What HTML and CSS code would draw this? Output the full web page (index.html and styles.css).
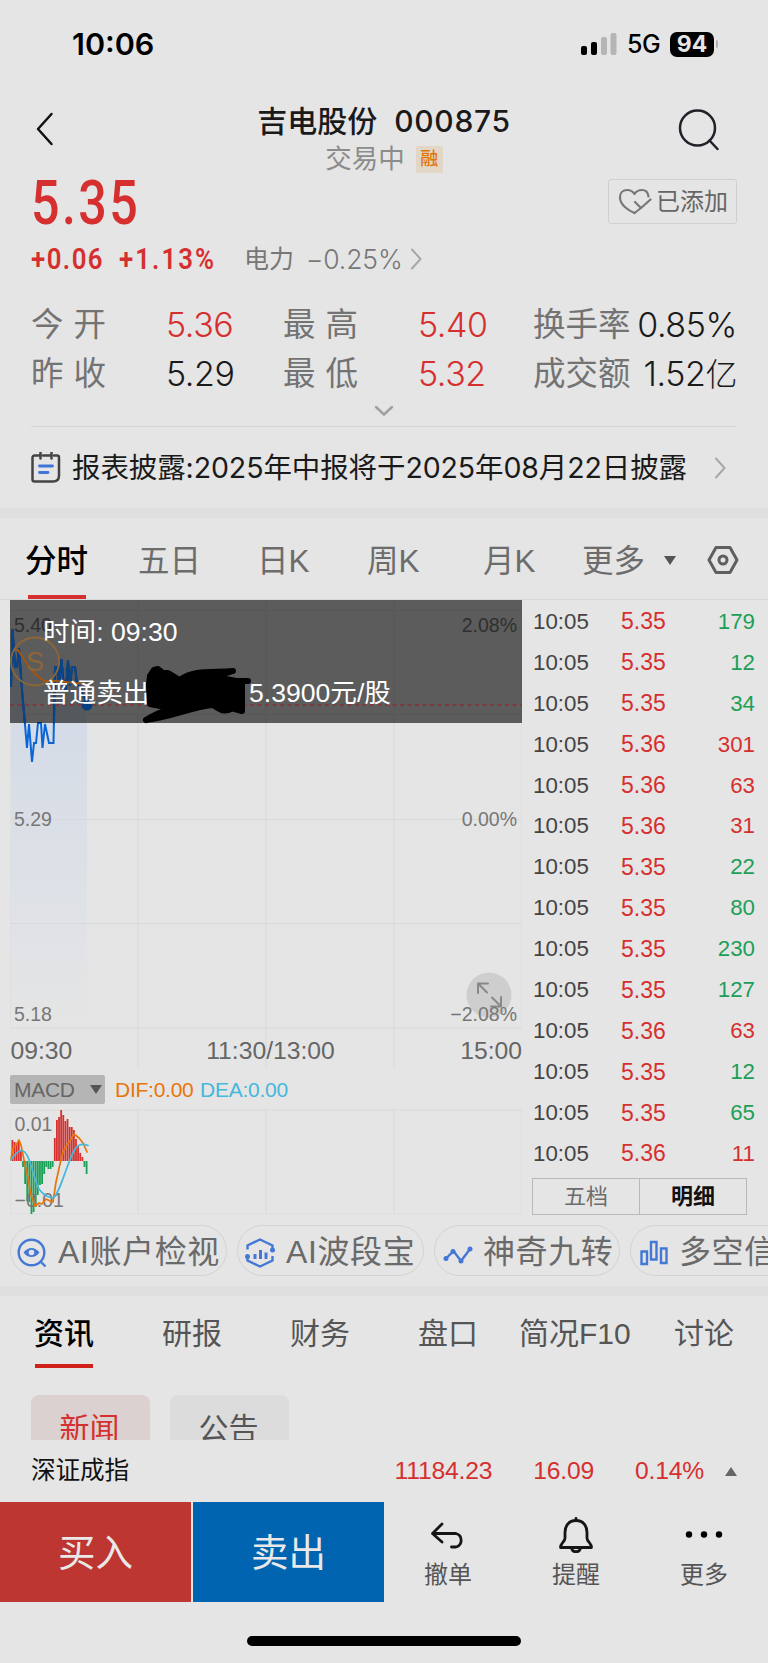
FILE: index.html
```html
<!DOCTYPE html>
<html lang="zh-CN">
<head>
<meta charset="UTF-8">
<meta name="viewport" content="width=device-width, initial-scale=1.0">
<title>吉电股份 000875</title>
<link rel="stylesheet" href="styles.css">
</head>
<body>
<div class="status">
    <span class="clock">10:06</span>
    <div class="status-right">
        <svg width="36" height="22" viewBox="0 0 36 22">
            <rect x="0" y="13" width="6" height="9" rx="2"/>
            <rect x="10" y="9" width="6" height="13" rx="2"/>
            <rect x="20" y="4" width="6" height="18" rx="2" fill="#b5b5b5"/>
            <rect x="29.500" y="0" width="6" height="22" rx="2" fill="#b5b5b5"/>
        </svg>
        <span class="network">5G</span>
        <span class="battery">94</span>
        <span class="battery-tip"></span>
    </div>
</div>

<div class="header">
    <svg class="back" width="18" height="34" viewBox="0 0 18 34"><path d="M15.500 2L2 17l13.500 15"/></svg>
    <div class="header-title">
        <h1>吉电股份<span class="code">000875</span></h1>
        <div class="sub"><span>交易中</span><span class="badge">融</span></div>
    </div>
    <svg class="search" width="42" height="42" viewBox="0 0 42 42"><circle cx="19.500" cy="19" r="17.500"/><path d="M31.500 31.500l8 8.500"/></svg>
</div>

<div class="quote">
    <div class="quote-top">
        <span class="price">5.35</span>
        <div class="added">
            <svg width="34" height="28" viewBox="0 0 34 28"><path d="M16.500 25C11 23 2 17 2 9.500 2 5 5 2 9 2c3.500 0 6 1.500 7.500 4C18 3.500 20.500 2 24 2c3.500 0 6 2.500 6.500 6.500"/><path d="M17 14l6 6L32.500 11.500M23 20l-6.500 5"/></svg>
            <span>已添加</span>
        </div>
    </div>
    <div class="change">
        <span class="chg">+0.06</span>
        <span class="pct">+1.13%</span>
        <span class="sector">电力</span>
        <span class="sector-pct">−0.25%</span>
        <svg width="13" height="22" viewBox="0 0 13 22"><path d="M2 1.500L10.500 11 2 20.500"/></svg>
    </div>
    <div class="stats">
        <span class="k wide">今开</span><span class="v red">5.36</span>
        <span class="k wide">最高</span><span class="v red">5.40</span>
        <span class="k">换手率</span><span class="v last">0.85%</span>
        <span class="k wide">昨收</span><span class="v">5.29</span>
        <span class="k wide">最低</span><span class="v red">5.32</span>
        <span class="k">成交额</span><span class="v last">1.52<i>亿</i></span>
    </div>
    <div class="expand"><svg width="20" height="12" viewBox="0 0 20 12"><path d="M2 2l8 7.500L18 2"/></svg></div>
</div>

<div class="notice">
    <svg width="30" height="31" viewBox="0 0 30 31">
        <path d="M8 3.500H3.500a2 2 0 0 0-2 2v22a2 2 0 0 0 2 2H22q6 0 6-6v-18a2 2 0 0 0-2-2h-3M12 3.500h7M9.500 0v6.500M20.500 0v6.500" class="ink"/>
        <path d="M8.500 14h13M8.500 20.500h8.500" class="line"/>
    </svg>
    <span class="notice-text">报表披露:2025年中报将于2025年08月22日披露</span>
    <svg class="more-arrow" width="13" height="22" viewBox="0 0 13 22"><path d="M2 1.500L10.500 11 2 20.500"/></svg>
</div>
<div class="band"></div>

<div class="periods">
    <span class="active">分时</span>
    <span>五日</span>
    <span>日K</span>
    <span>周K</span>
    <span>月K</span>
    <span>更多<b class="caret"></b></span>
    <svg width="32" height="28" viewBox="0 0 32 28"><path d="M9 1.500h14L30 14l-7 12.500H9L2 14z"/><circle cx="16" cy="14" r="4"/></svg>
</div>

<div class="market">
    <div class="charts">
        <div class="minute">
            <svg width="512" height="468" viewBox="10 600 512 468">
                <defs>
                    <linearGradient id="fill" x1="0" y1="0" x2="0" y2="1">
                        <stop offset="0" stop-color="#d0d9e8"/>
                        <stop offset="1" stop-color="#e5e5e5"/>
                    </linearGradient>
                </defs>
                <path fill="url(#fill)" d="M10 686L12.500 629 15 667H17L19 648 22 690 27 723H51L55 667H70L80 686 87 705V1028H10z"/>
                <path class="grid" d="M10 610.500H522M10 714.500H522M10 819.500H522M10 923.500H522M10 1028H522M138 600V1068M266 600V1068M394 600V1068"/>
                <path class="grid edge" d="M10.500 600V1028M521.500 600V1028"/>
                <text class="axis" x="14" y="632">5.40</text>
                <text class="axis" x="517" y="632" text-anchor="end">2.08%</text>
                <circle cx="489" cy="995" r="22.500" fill="#cecece"/>
                <path class="zoom-arrow" d="M478 993V983.500H488M478.500 984L487 992.500M501 997V1006.500H491M500.500 1006L492 997.500"/>
                <text class="axis" x="14" y="826">5.29</text>
                <text class="axis" x="517" y="826" text-anchor="end">0.00%</text>
                <text class="axis" x="14" y="1021">5.18</text>
                <text class="axis" x="517" y="1021" text-anchor="end">−2.08%</text>
                <text class="time" x="10.500" y="1059">09:30</text>
                <text class="time" x="270.500" y="1059" text-anchor="middle">11:30/13:00</text>
                <text class="time" x="522" y="1059" text-anchor="end">15:00</text>
                <path class="trend" d="M11 686L12.500 629 15 667H17L19 648 22 690 27 748 29 724 32 762 34 743H36L38 723H41L42.500 748 45 724 49 743H53.500L55 667H57L59 684 61.500 659 64 690H66L68 660 70 686 72 667H75L77 684 80 686 87 705"/>
                <rect x="10" y="600" width="512" height="123" fill="#000" fill-opacity=".6"/>
                <!-- part of the lines still visible through the tip -->
                <path class="trend dim" d="M11 686L12.500 629 15 667H17L19 648 22 690 25 723M54 723L55 667H57L59 684 61.500 659 64 690H66L68 660 70 686 72 667H75L77 684 80 686 87 705"/>
                <path class="avg" d="M14 650H18L23 658 30 668 36 675 44 681H56L84 684"/>
                <circle class="sell" cx="35" cy="661.500" r="24"/>
                <text class="sell-text" x="35" y="671" text-anchor="middle">S</text>
                <path class="dash" d="M10 705H522"/>
                <circle cx="87" cy="705" r="5.500" fill="#083f80"/>
                <g class="tip">
                    <text x="43" y="641">时间: 09:30</text>
                    <text x="43" y="702">普通卖出</text>
                    <text x="249" y="702">5.3900元/股</text>
                </g>
                <!-- crossed out amount -->
                <path class="scribble" fill="#000" d="M149 684L150 676 154 670 158 669 163 673 168 673 178 679 192 680 226 679 241 682V706L222 707 205 703 185 707 160 706 150 704z"/>
                <path class="scribble" d="M180 680C194 669 215 673 233 671C220 676 203 675 190 680M225 681H248M242 683V711L224 706M146 720C158 712 178 705 198 703M146 720C172 717 192 707 212 705C220 708 222 714 233 708"/>
            </svg>
        </div>
        <div class="macd-head">
            <span class="macd-name">MACD<b class="caret"></b></span>
            <span class="dif">DIF:0.00</span>
            <span class="dea">DEA:0.00</span>
        </div>
        <svg class="macd" width="512" height="107" viewBox="10 1108 512 107">
            <path class="grid" d="M10 1110H522M138 1108V1214M266 1108V1214M394 1108V1214"/>
            <path class="grid edge" d="M10 1214H522M10.500 1110V1214M521.500 1110V1214"/>
            <g id="macdBars"></g>
            <text class="axis" x="14.500" y="1131">0.01</text>
            <text class="axis" x="14.500" y="1207">−0.01</text>
            <path class="dif-line" d="M11 1159L13 1148 16 1145 19 1140 21 1145 24 1160 28 1178 31 1195 35 1206 39 1203 42 1204 46 1199 50 1201 53 1202 56 1182 60 1164 63 1152 67 1145 70 1141 74 1134 79 1138 83 1143 87 1152"/>
            <path class="dea-line" d="M11 1160Q16 1152 21 1150.500C30 1150 33 1178 39 1189C44 1196 48 1197 53 1198C60 1194 66 1165 75 1149Q80 1142 88 1145.500"/>
        </svg>
    </div>
    <div class="ticks">
        <div id="tickList"></div>
        <div class="tick-switch"><span>五档</span><span class="on">明细</span></div>
    </div>
</div>

<div class="tools">
    <div class="tool t1">
        <svg width="30" height="30" viewBox="0 0 30 30"><circle cx="14.500" cy="14.500" r="12.800"/><path d="M23.500 23.500l5 5"/><path class="solid" fill-rule="evenodd" d="M6.500 14.500C11 8.500 18 8.500 22.500 14.500 18 20.500 11 20.500 6.500 14.500zM14.500 11.700a2.800 2.800 0 1 0 0 5.600 2.800 2.800 0 1 0 0-5.600z"/></svg>
        <span>AI账户检视</span>
    </div>
    <div class="tool t2">
        <svg width="30" height="30" viewBox="0 0 30 30"><path d="M2.500 11.500V7.500L15 1.500l12.500 6v4M2.500 18v4.500L15 28.500l12.500-6V18"/><path class="thick" d="M10 16v5M15.500 12v9M21 14.500v6.500"/><circle class="solid" cx="27.500" cy="12" r="2.500"/><circle class="solid" cx="2.500" cy="18.500" r="2.500"/></svg>
        <span>AI波段宝</span>
    </div>
    <div class="tool t3">
        <svg width="30" height="30" viewBox="0 0 30 30"><path d="M3 20.500L10.500 13 18 23 27 11"/><circle class="solid" cx="3" cy="20.500" r="2.500"/><circle class="solid" cx="10" cy="13.500" r="2.500"/><circle class="solid" cx="18" cy="23" r="2.500"/><circle class="solid" cx="27" cy="11" r="2.500"/></svg>
        <span>神奇九转</span>
    </div>
    <div class="tool t4">
        <svg width="30" height="30" viewBox="0 0 30 30"><path d="M2.500 13.500h5.500V26H2.500zM12 4h5.500v17.500H12zM22 10.500h5.500V25H22z"/></svg>
        <span>多空信号</span>
    </div>
</div>
<div class="band"></div>

<div class="info-tabs">
    <span class="active">资讯</span>
    <span>研报</span>
    <span>财务</span>
    <span>盘口</span>
    <span>简况F10</span>
    <span>讨论</span>
</div>
<div class="pills">
    <span class="pill on">新闻</span>
    <span class="pill">公告</span>
</div>

<div class="index-bar">
    <span class="index-name">深证成指</span>
    <span>11184.23</span>
    <span>16.09</span>
    <span>0.14%</span>
    <b class="up"></b>
</div>
<div class="actions">
    <div class="buy">买入</div>
    <div class="sell-btn">卖出</div>
    <div class="action">
        <svg width="36" height="36" viewBox="0 0 36 36"><path d="M12 7L2.500 16.500 12 25M3 16.500H26a7 7 0 0 1 0 13.500H21.500"/></svg>
        <span>撤单</span>
    </div>
    <div class="action">
        <svg width="36" height="36" viewBox="0 0 36 36"><path d="M18 3.500C10.500 3.500 7 9 7 15.500V21C7 25 2.500 26 2.500 30.500H33.500C33.500 26 29 25 29 21V15.500C29 9 25.500 3.500 18 3.500zM18 3.500V1.500M13.500 31c1 5 8 5 9 0"/></svg>
        <span>提醒</span>
    </div>
    <div class="action">
        <svg width="40" height="36" viewBox="0 0 40 36"><g fill="#000" stroke="none"><circle cx="5" cy="17.500" r="3.200"/><circle cx="20" cy="17.500" r="3.200"/><circle cx="35" cy="17.500" r="3.200"/></g></svg>
        <span>更多</span>
    </div>
</div>
<div class="home"></div>

<script>
var ticks = [
    ['5.35', 179, 'g'], ['5.35', 12, 'g'], ['5.35', 34, 'g'], ['5.36', 301, 'r'],
    ['5.36', 63, 'r'], ['5.36', 31, 'r'], ['5.35', 22, 'g'], ['5.35', 80, 'g'],
    ['5.35', 230, 'g'], ['5.35', 127, 'g'], ['5.36', 63, 'r'], ['5.35', 12, 'g'],
    ['5.35', 65, 'g'], ['5.36', 11, 'r']
];
var html = '';
ticks.forEach(function(t) {
    html += '<div class="tick"><span>10:05</span><span class="red">' + t[0] + '</span>' +
        '<span class="' + (t[2] == 'g' ? 'green' : 'red') + '">' + t[1] + '</span></div>';
});
document.getElementById('tickList').innerHTML = html;

// MACD histogram, one bar per minute, zero line at y=1161
var bars = [21, 19, 18, 20, 10, -6, -23, -40, -41, -53, -51, -46, -34, -24, -23, -13, -6, -8, -8, -6,
    23, 41, 44, 51, 46, 40, 42, 34, 34, 31, 22, 15, 8, 4, -6, -13];
var rects = '';
bars.forEach(function(v, i) {
    var x = 11.5 + i * 2.12;
    rects += '<rect x="' + x.toFixed(2) + '" y="' + (v > 0 ? 1161 - v : 1161) + '" width="1.8" height="' +
        Math.abs(v) + '" fill="' + (v > 0 ? '#d5302f' : '#1c9f58') + '"/>';
});
document.getElementById('macdBars').innerHTML = rects;
</script>
</body>
</html>
```
FILE: styles.css
```css
* {
    box-sizing: border-box;
}
body {
    margin: 0;
    width: 768px;
    height: 1663px;
    overflow: hidden;
    background: #e5e5e5;
    color: #1a1a1a;
    font-family: "Liberation Sans", "Noto Sans CJK SC", sans-serif;
    font-size: 30px;
    line-height: 1;
}
svg {
    display: block;
    flex: none;
    fill: none;
    stroke-linecap: round;
    stroke-linejoin: round;
}
span, h1 {
    white-space: nowrap;
}
.red {
    color: #d5302f;
}
.green {
    color: #1c9f58;
}

/* status bar */
.status {
    height: 88px;
    padding: 0 50px 0 72px;
    display: flex;
    justify-content: space-between;
    align-items: center;
    color: #000;
    font-family: Inter, sans-serif;
}
.clock {
    font-size: 30.5px;
    font-weight: 600;
}
.status-right {
    display: flex;
    align-items: center;
}
.status-right svg {
    fill: #000;
}
.network {
    margin-left: 10px;
    width: 43px;
    font-size: 25px;
    font-weight: 500;
    letter-spacing: -0.5px;
}
.battery {
    width: 44px;
    height: 25px;
    border-radius: 7px;
    background: #000;
    color: #e5e5e5;
    font-size: 23px;
    font-weight: 700;
    line-height: 25px;
    text-align: center;
}
.battery-tip {
    width: 2px;
    height: 8px;
    margin-left: 2px;
    border-radius: 0 2px 2px 0;
    background: #b0b0b0;
}

/* header */
.header {
    height: 88px;
    padding: 0 48px 0 36px;
    display: flex;
    justify-content: space-between;
}
.back {
    margin-top: 24px;
    stroke: #111;
    stroke-width: 2.5;
}
.search {
    margin-top: 21px;
    stroke: #20222a;
    stroke-width: 2.5;
}
.header-title {
    display: flex;
    flex-direction: column;
    align-items: center;
    padding-left: 36px;
}
.header-title h1 {
    margin: 14px 0 0;
    font-size: 30px;
    font-weight: 500;
    line-height: 34px;
    font-family: "Noto Sans CJK SC", sans-serif;
}
.code {
    margin-left: 17px;
    font-family: Inter, sans-serif;
    font-size: 30px;
    letter-spacing: 0.7px;
}
.sub {
    margin-top: 8px;
    display: flex;
    align-items: center;
    gap: 11px;
    color: #8c8c8c;
    font-size: 26.5px;
}
.badge {
    width: 27px;
    height: 27px;
    border-radius: 2px;
    background: #e2d6c7;
    color: #e07508;
    font-size: 18px;
    font-weight: 500;
    line-height: 26px;
    text-align: center;
}

/* quote */
.quote {
    height: 251px;
    margin: 0 31px;
    border-bottom: 1px solid #d3d4d8;
}
.quote-top {
    height: 58px;
    display: flex;
    justify-content: space-between;
}
.price {
    color: #d5302f;
    font-family: Roboto, sans-serif;
    font-size: 62px;
    font-weight: 500;
    line-height: 53px;
    letter-spacing: 3px;
    transform: scaleX(0.81);
    transform-origin: left;
}
.added {
    width: 129px;
    height: 45px;
    margin-top: 3px;
    padding-left: 9px;
    display: flex;
    align-items: center;
    gap: 4px;
    border: 1px solid #d0d0d0;
    border-radius: 3px;
    color: #666;
    font-size: 24px;
}
.added svg {
    stroke: #777;
    stroke-width: 2.2;
}
.change {
    height: 50px;
    display: flex;
    align-items: center;
}
.chg, .pct {
    color: #d5302f;
    font-family: Roboto, sans-serif;
    font-size: 30px;
    font-weight: 600;
    letter-spacing: 1.7px;
    transform: scaleX(0.86);
    transform-origin: left;
}
.chg {
    width: 88px;
}
.pct {
    width: 125px;
    letter-spacing: 2.4px;
}
.sector, .sector-pct {
    color: #777;
    font-size: 25px;
}
.sector-pct {
    margin: 0 7px 0 12px;
    font-family: Inter, sans-serif;
    font-size: 26.5px;
    font-weight: 300;
    letter-spacing: -0.1px;
}
.change svg, .more-arrow {
    stroke: #a8a8a8;
    stroke-width: 2;
}
.stats {
    margin-top: 16px;
    display: grid;
    grid-template-columns: 76px 176px 76px 174px 98px 106px;
    grid-auto-rows: 49px;
    align-items: center;
}
.k {
    padding-top: 1px;
    color: #737373;
    font-size: 32.5px;
}
.wide {
    letter-spacing: 10px;
}
.v {
    padding-left: 59px;
    font-family: Inter, "Noto Sans CJK SC", sans-serif;
    font-size: 34px;
    font-weight: 300;
    letter-spacing: -0.4px;
}
.v.last {
    padding: 0;
    text-align: right;
}
.v i {
    font-style: normal;
    font-size: 32px;
}
.expand {
    display: flex;
    justify-content: center;
    padding-top: 7px;
}
.expand svg {
    stroke: #a0a0a0;
    stroke-width: 2.5;
}

/* notice */
.notice {
    height: 81px;
    padding: 0 41px 0 31px;
    display: flex;
    align-items: center;
}
.notice .ink {
    stroke: #444;
    stroke-width: 2.5;
}
.notice .line {
    stroke: #3f74d8;
    stroke-width: 2.8;
}
.notice-text {
    margin: 2px 0 0 11px;
    flex: 1;
    font-family: Inter, "Noto Sans CJK SC", sans-serif;
    font-size: 28.5px;
    letter-spacing: -0.1px;
}
.band {
    height: 10px;
    background: #dfdfdf;
}

/* period tabs */
.periods {
    height: 82px;
    padding-left: 25px;
    display: grid;
    grid-template-columns: 113px 119px 110px 116px 99px 125px 32px;
    grid-template-rows: 81px;
    border-bottom: 1px solid #d8d8d8;
    color: #6c6c6c;
    font-size: 31.5px;
    line-height: 86px;
}
.periods .active {
    color: #000;
    font-weight: 500;
    background: linear-gradient(#d5302f, #d5302f) 3px bottom / 58px 4px no-repeat;
}
.periods svg {
    margin-top: 28px;
    stroke: #5f5f5f;
    stroke-width: 3;
}
.caret {
    display: inline-block;
    border: 6px solid transparent;
    border-top: 9px solid #555;
    border-bottom: 0;
}
.periods .caret {
    margin-left: 19px;
    vertical-align: 7px;
}

/* charts */
.market {
    display: flex;
    height: 615px;
    padding-left: 10px;
}
.charts {
    width: 512px;
}
.minute {
    height: 468px;
}
.grid {
    stroke: #d8d9db;
    stroke-width: 1;
}
.grid.edge {
    stroke: #dedfe0;
}
.axis {
    fill: #777;
    font-size: 19.5px;
}
.time {
    fill: #666;
    font-size: 24.7px;
}
.zoom-arrow {
    stroke: #888;
    stroke-width: 2;
}
.trend {
    stroke: #0a66d8;
    stroke-width: 2;
    stroke-linejoin: miter;
}
.trend.dim {
    stroke: #08458a;
}
.avg {
    stroke: #a05510;
    stroke-width: 2;
}
.sell {
    stroke: #8c6638;
    stroke-width: 1.8;
}
.sell-text {
    fill: #8c6638;
    font-size: 27px;
}
.dash {
    stroke: #85303a;
    stroke-width: 1.7;
    stroke-dasharray: 4 3.5;
    stroke-linecap: butt;
}
.tip text {
    fill: #fff;
    font-size: 26.6px;
}
.scribble {
    stroke: #000;
    stroke-width: 6;
}
.macd-head {
    height: 40px;
    padding-top: 7px;
    display: flex;
    font-size: 21px;
    line-height: 30px;
}
.macd-name {
    width: 95px;
    height: 29px;
    padding-left: 4px;
    border-radius: 2px;
    background: #b5b5b5;
    color: #666;
    letter-spacing: -0.3px;
}
.macd-name .caret {
    margin-left: 15px;
    vertical-align: 3px;
}
.dif {
    width: 85px;
    margin-left: 10px;
    color: #e8750a;
    letter-spacing: -0.25px;
}
.dea {
    color: #45b8dc;
    letter-spacing: -0.25px;
}
.dif-line {
    stroke: #e8750a;
    stroke-width: 1.7;
}
.dea-line {
    stroke: #45b8dc;
    stroke-width: 1.7;
}

/* tick list */
.ticks {
    padding: 1px 0 0 11px;
}
.tick {
    height: 40.93px;
    padding-top: 1px;
    display: grid;
    grid-template-columns: 88px 60px 74px;
    align-items: center;
    font-size: 22.3px;
    color: #444;
}
.tick span:nth-child(2) {
    font-size: 23px;
}
.tick span:last-child {
    text-align: right;
}
.tick-switch {
    width: 215px;
    height: 37px;
    margin: 4px 0 0 -1px;
    display: flex;
    border: 1.5px solid #b9b9b9;
    color: #6c6c6c;
    font-size: 22px;
    line-height: 35px;
    text-align: center;
}
.tick-switch span {
    flex: 1;
}
.tick-switch .on {
    border-left: 1.5px solid #b9b9b9;
    color: #111;
    font-weight: 700;
}

/* tools */
.tools {
    height: 71px;
    padding: 10px 0 0 10px;
    display: flex;
    gap: 10px;
    overflow: hidden;
}
.tool {
    flex: none;
    height: 51px;
    padding-left: 6px;
    display: flex;
    align-items: center;
    border: 1px solid #d2d2d2;
    border-radius: 26px;
    color: #6a6a6a;
    font-size: 32px;
    letter-spacing: 0.6px;
}
.tool span {
    padding-top: 2px;
}
.tool svg {
    margin: 5px 11px 0 0;
    stroke: #4478d6;
    stroke-width: 2.4;
    stroke-linejoin: miter;
    stroke-linecap: butt;
}
.tool .thick {
    stroke-width: 3;
}
.solid {
    fill: #4478d6;
    stroke: none;
}
.t1 {
    width: 217px;
}
.t2 {
    width: 187px;
    padding-left: 7px;
}
.t3 {
    width: 186px;
}
.t3, .t4 {
    padding-left: 8px;
}
.t4 {
    width: 186px;
}
.t3 svg, .t4 svg {
    margin-right: 10px;
}

/* info tabs */
.info-tabs {
    height: 99px;
    padding: 0 33px 0 34px;
    display: flex;
    color: #555;
    font-size: 30px;
    line-height: 75px;
}
.info-tabs span {
    width: 128px;
}
.info-tabs .active {
    color: #000;
    font-weight: 500;
    background: linear-gradient(#d0211a, #d0211a) 1px 68px / 58px 4px no-repeat;
}
.info-tabs span:nth-child(4) {
    width: 101px;
}
.info-tabs span:nth-child(5) {
    width: 155px;
}
.info-tabs span:last-child {
    width: 60px;
}
.pills {
    height: 45px;
    padding-left: 31px;
    display: flex;
    gap: 20px;
    overflow: hidden;
}
.pill {
    width: 119px;
    height: 66px;
    border-radius: 8px;
    background: #dcdcdc;
    color: #555;
    font-size: 30px;
    line-height: 67px;
    text-align: center;
    text-indent: -2px;
}
.pill.on {
    background: #dcd1d1;
    color: #d5302f;
}

/* bottom */
.index-bar {
    height: 62px;
    padding: 0 31px;
    display: flex;
    align-items: center;
    color: #d5302f;
    font-size: 24.7px;
}
.index-bar span {
    margin-right: 41px;
    letter-spacing: -0.2px;
}
.index-bar .index-name {
    margin-right: auto;
    color: #111;
}
.index-bar span:nth-of-type(4) {
    margin-right: 21px;
}
.up {
    border: 6px solid transparent;
    border-bottom: 9px solid #666;
    border-top: 0;
}
.actions {
    height: 100px;
    display: flex;
}
.buy, .sell-btn {
    width: 191px;
    background: #be3632;
    color: #e8e8e8;
    font-size: 37.5px;
    line-height: 102px;
    text-align: center;
}
.sell-btn {
    margin-left: 2px;
    background: #0064b0;
}
.action {
    flex: 1;
    padding-top: 15px;
    display: flex;
    flex-direction: column;
    align-items: center;
    gap: 10px;
    color: #555;
    font-size: 24px;
}
.action svg {
    stroke: #151515;
    stroke-width: 2.8;
}
.home {
    width: 274px;
    height: 10px;
    margin: 34px auto 0;
    border-radius: 5px;
    background: #000;
}
```
